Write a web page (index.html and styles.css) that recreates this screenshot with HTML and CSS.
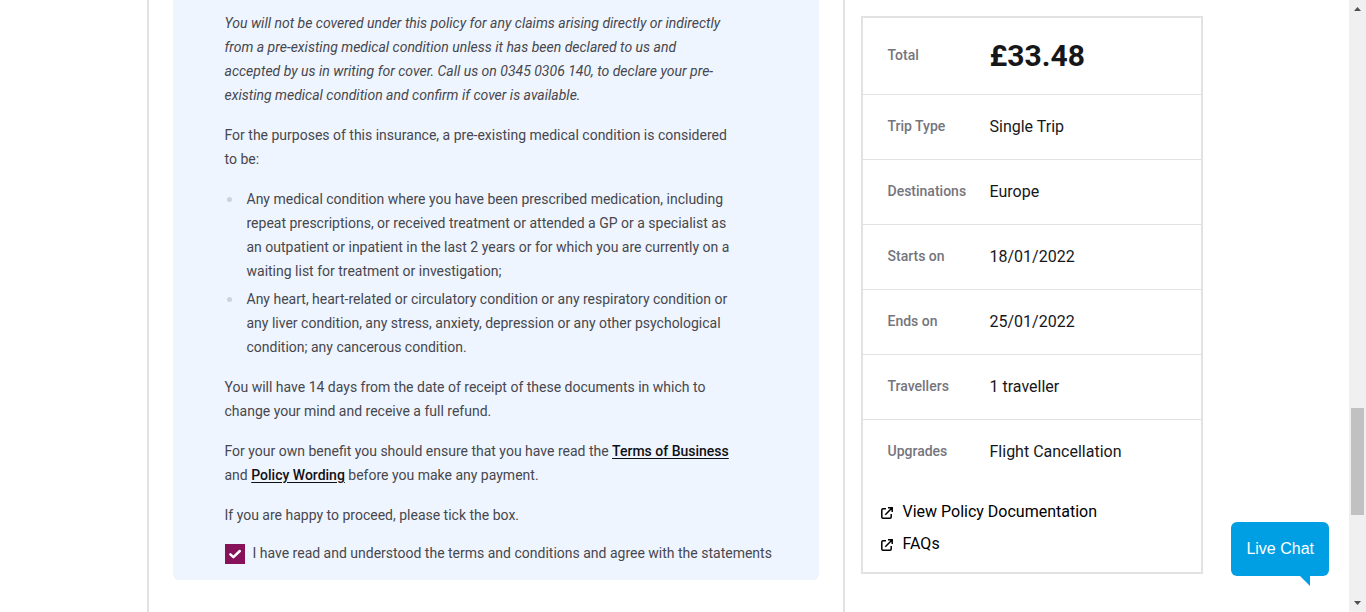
FILE: index.html
```html
<!DOCTYPE html>
<html lang="en">
<head>
<meta charset="utf-8">
<title>Travel insurance - Your quote</title>
<link rel="stylesheet" href="styles.css">
</head>
<body>
<div class="page">
  <div class="layout">
    <main class="content">
      <section class="panel">
        <div class="prose">
          <p><em>You will not be covered under this policy for any claims arising directly or indirectly from a pre-existing medical condition unless it has been declared to us and accepted by us in writing for cover. Call us on 0345 0306 140, to declare your pre-existing medical condition and confirm if cover is available.</em></p>
          <p>For the purposes of this insurance, a pre-existing medical condition is considered to be:</p>
          <ul class="bullets">
            <li>Any medical condition where you have been prescribed medication, including repeat prescriptions, or received treatment or attended a GP or a specialist as an outpatient or inpatient in the last 2 years or for which you are currently on a waiting list for treatment or investigation;</li>
            <li>Any heart, heart-related or circulatory condition or any respiratory condition or any liver condition, any stress, anxiety, depression or any other psychological condition; any cancerous condition.</li>
          </ul>
          <p>You will have 14 days from the date of receipt of these documents in which to change your mind and receive a full refund.</p>
          <p>For your own benefit you should ensure that you have read the <a href="#terms">Terms of Business</a> and <a href="#wording">Policy Wording</a> before you make any payment.</p>
          <p>If you are happy to proceed, please tick the box.</p>
        </div>
        <div class="agree">
          <span class="tick">
            <input class="tick-input" type="checkbox" id="agree" checked>
            <svg class="tick-mark" viewBox="0 0 20 20" aria-hidden="true"><path d="M5.4 10.4 8.4 13.2 14.8 7" fill="none" stroke="#fff" stroke-width="2.5" stroke-linecap="round" stroke-linejoin="round"/></svg>
          </span>
          <label for="agree">I have read and understood the terms and conditions and agree with the statements</label>
        </div>
      </section>
    </main>
    <aside class="summary">
      <dl class="rows">
        <div class="row row-total"><dt>Total</dt><dd>£33.48</dd></div>
        <div class="row"><dt>Trip Type</dt><dd>Single Trip</dd></div>
        <div class="row"><dt>Destinations</dt><dd>Europe</dd></div>
        <div class="row"><dt>Starts on</dt><dd>18/01/2022</dd></div>
        <div class="row"><dt>Ends on</dt><dd>25/01/2022</dd></div>
        <div class="row"><dt>Travellers</dt><dd>1 traveller</dd></div>
        <div class="row"><dt>Upgrades</dt><dd>Flight Cancellation</dd></div>
      </dl>
      <nav class="links">
        <a href="#documents"><svg class="ext" viewBox="0 0 12 12" aria-hidden="true"><path d="M5 1.8H2Q.8 1.8.8 3V10Q.8 11.2 2 11.2H9Q10.2 11.2 10.2 10V7M4.3 7.7 10.5 1.5M7 .8H11.2V5" fill="none" stroke="#000" stroke-width="1.5"/></svg>View Policy Documentation</a>
        <a href="#faqs"><svg class="ext" viewBox="0 0 12 12" aria-hidden="true"><path d="M5 1.8H2Q.8 1.8.8 3V10Q.8 11.2 2 11.2H9Q10.2 11.2 10.2 10V7M4.3 7.7 10.5 1.5M7 .8H11.2V5" fill="none" stroke="#000" stroke-width="1.5"/></svg>FAQs</a>
      </nav>
    </aside>
  </div>
</div>
<button class="chat" type="button">Live Chat</button>
<div class="scrollbar" aria-hidden="true">
  <svg class="arrow" viewBox="0 0 17 17"><path d="M5 11H12L8.5 7Z" fill="#505050"/></svg>
  <div class="track"><div class="thumb"></div></div>
  <svg class="arrow" viewBox="0 0 17 17"><path d="M5 6H12L8.5 10Z" fill="#505050"/></svg>
</div>
</body>
</html>
```
FILE: styles.css
```css
* {
  box-sizing: border-box;
}

body {
  margin: 0;
  background: #fff;
  color: #47474d;
  font: 14px/24px Roboto, sans-serif;
}

.page {
  padding-right: 17px;
}

.layout {
  display: grid;
  grid-template-columns: minmax(0, 1fr) 342px;
  gap: 16px;
  align-items: start;
  max-width: 1056px;
  min-height: 100vh;
  margin: 0 auto;
}

.content {
  align-self: stretch;
  padding: 0 24px 32px;
  border: solid #e2e2e4;
  border-width: 0 2px;
}

.panel {
  padding: 11px 0 15px 52px;
  border-radius: 0 0 6px 6px;
  background: #eef5ff;
}

.prose {
  max-width: 508px;
}

.prose p {
  margin: 0 0 16px;
}

.prose p:last-child {
  margin-bottom: 14px;
}

.prose a {
  color: #111114;
  font-weight: 500;
  text-underline-offset: 2px;
}

.bullets {
  margin: 0 0 16px;
  padding: 0;
  list-style: none;
}

.bullets li {
  position: relative;
  padding-left: 22px;
}

.bullets li + li {
  margin-top: 4px;
}

.bullets li::before {
  content: "";
  position: absolute;
  top: 10px;
  left: 2px;
  width: 5px;
  height: 5px;
  border-radius: 50%;
  background: #d0d1da;
}

.agree {
  display: flex;
  align-items: flex-start;
  gap: 8px;
}

.tick {
  display: grid;
  flex: none;
  width: 20px;
  height: 20px;
  margin-top: 3px;
}

.tick-input,
.tick-mark {
  grid-area: 1 / 1;
  width: 20px;
  height: 20px;
  margin: 0;
}

.tick-input {
  appearance: none;
  border: 1px solid #871259;
}

.tick-input:checked {
  background: #871259;
}

.tick-mark {
  pointer-events: none;
}

.summary {
  margin-top: 16px;
  padding-bottom: 12px;
  border: 2px solid #e2e2e4;
}

.rows {
  margin: 0;
}

.row {
  display: grid;
  grid-template-columns: 102px 1fr;
  align-items: center;
  padding: 20px 24px 20px 25px;
}

.row + .row {
  border-top: 1px solid #e2e2e4;
}

.row dt {
  padding-bottom: 2px;
  color: #75757d;
  font-weight: 500;
  line-height: 22px;
}

.row dd {
  margin: 0;
  color: #17171a;
  font-size: 16px;
}

.row-total dd {
  font-size: 30px;
  font-weight: 700;
  line-height: 36px;
}

.links {
  display: grid;
  padding: 12px 18px 0;
}

.links a {
  display: flex;
  align-items: center;
  gap: 10px;
  color: #000;
  font-size: 16px;
  line-height: 32px;
  text-decoration: none;
}

.ext {
  flex: none;
  width: 12px;
  height: 12px;
  margin-top: 2px;
}

.chat {
  position: fixed;
  right: 37px;
  bottom: 36px;
  padding: 15px;
  border: 0;
  border-radius: 6px;
  background: #009fe3;
  color: #fff;
  font: 16px/24px "Liberation Sans", Arial, sans-serif;
}

.chat::after {
  content: "";
  position: absolute;
  top: 100%;
  right: 19px;
  width: 10px;
  height: 10px;
  background: #009fe3;
  clip-path: polygon(0 0, 100% 0, 100% 100%);
}

.scrollbar {
  position: fixed;
  top: 0;
  right: 0;
  bottom: 0;
  display: flex;
  flex-direction: column;
  width: 17px;
  background: #f0f0f0;
}

.arrow {
  flex: none;
  height: 17px;
}

.track {
  display: grid;
  flex: 1;
  grid-template-rows: 391fr 107fr 80fr;
}

.thumb {
  grid-row: 2;
  margin: 0 2px;
  background: #c1c1c1;
}
```
